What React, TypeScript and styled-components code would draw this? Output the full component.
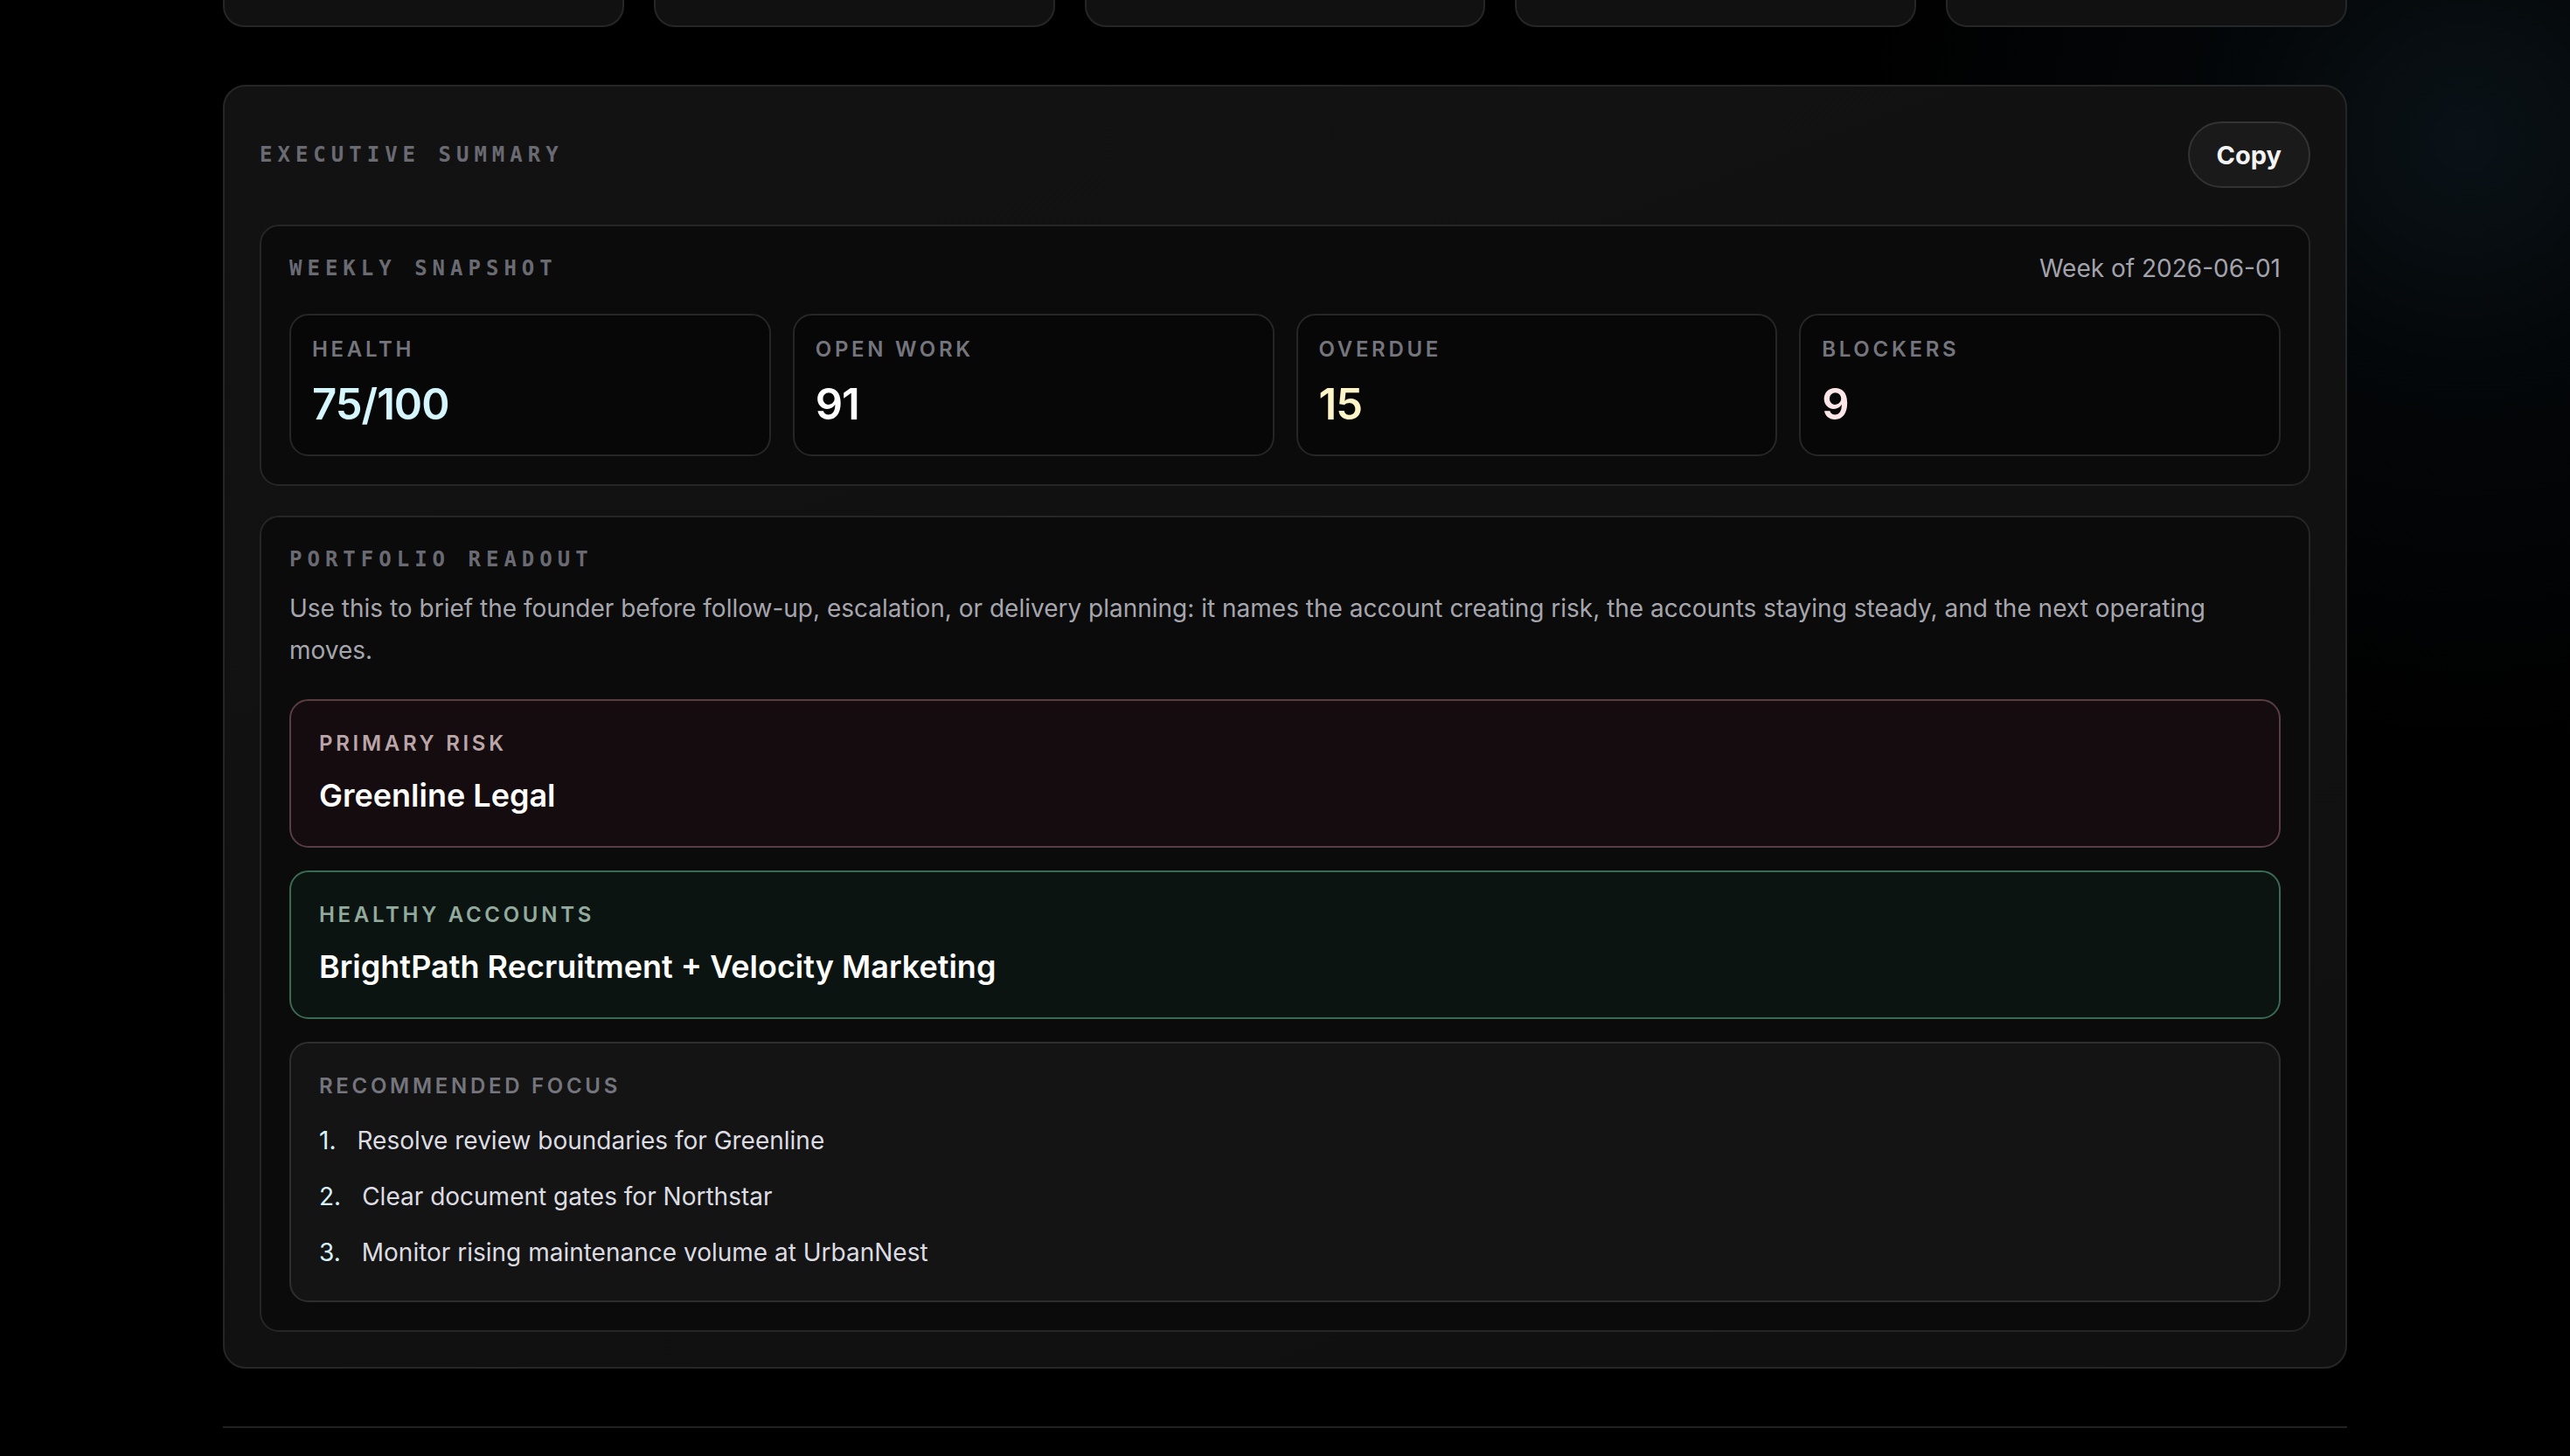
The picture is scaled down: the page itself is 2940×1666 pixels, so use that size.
import React from 'react';
import styled, { createGlobalStyle } from 'styled-components';

const GlobalStyle = createGlobalStyle`
  html, body {
    margin: 0;
    padding: 0;
    background: #000;
  }
  body {
    font-family: Inter, "Noto Sans", sans-serif;
    color: #f2f2f4;
    overflow: hidden;
  }
`;

const Page = styled.div`
  height: 1666px;
  background:
    radial-gradient(circle at 2820px 160px, rgba(20, 36, 46, 0.5) 0px, rgba(10, 18, 24, 0.35) 280px, rgba(0, 0, 0, 0) 700px),
    #000;
  overflow: hidden;
`;

const Column = styled.div`
  width: 2430px;
  margin: -149px auto 0;
  display: flex;
  flex-direction: column;
  gap: 66px;
`;

const TopCards = styled.div`
  display: grid;
  grid-template-columns: repeat(5, 1fr);
  gap: 34px;
`;

const TopCard = styled.div`
  height: 176px;
  background: #111;
  border: 2px solid #262626;
  border-radius: 24px;
`;

const Panel = styled.section`
  background: linear-gradient(160deg, #121212 0%, #101010 100%);
  border: 2px solid #262626;
  border-radius: 26px;
  padding: 40px;
  display: flex;
  flex-direction: column;
  gap: 42px;
`;

const PanelHeader = styled.div`
  display: flex;
  align-items: center;
  justify-content: space-between;
`;

const MonoLabel = styled.div`
  font-family: "DejaVu Sans Mono", "Liberation Mono", monospace;
  font-size: 24px;
  line-height: 32px;
  font-weight: 700;
  letter-spacing: 6px;
  text-transform: uppercase;
  color: #6a6a73;
`;

const CopyButton = styled.button`
  height: 76px;
  padding: 0 31px;
  border-radius: 999px;
  border: 2px solid #333;
  background: #1a1a1a;
  color: #f4f4f6;
  font-family: Inter, sans-serif;
  font-size: 29px;
  font-weight: 700;
  cursor: pointer;
`;

const Sections = styled.div`
  display: flex;
  flex-direction: column;
  gap: 34px;
`;

const Section = styled.div`
  background: #0b0b0b;
  border: 2px solid #262626;
  border-radius: 22px;
  padding: 32px;
`;

const SectionHeader = styled.div`
  display: flex;
  align-items: center;
  justify-content: space-between;
  margin-bottom: 36px;
`;

const WeekText = styled.div`
  font-size: 28px;
  line-height: 32px;
  color: #a3a3ad;
`;

const StatGrid = styled.div`
  display: grid;
  grid-template-columns: repeat(4, 1fr);
  gap: 25px;
`;

const StatCard = styled.div`
  background: #070707;
  border: 2px solid #262626;
  border-radius: 22px;
  padding: 23px 24px 29px;
`;

const SansLabel = styled.div<{ $tone?: string }>`
  font-size: 24px;
  line-height: 32px;
  font-weight: 600;
  letter-spacing: 3.7px;
  text-transform: uppercase;
  color: ${p => p.$tone || '#75757e'};
`;

const StatValue = styled.div<{ $color: string }>`
  margin-top: 19px;
  font-size: 49px;
  line-height: 56px;
  font-weight: 600;
  letter-spacing: -1px;
  color: ${p => p.$color};
`;

const Intro = styled.p`
  margin: 16px 0 32px;
  font-size: 28px;
  line-height: 48px;
  color: #a6a6ae;
`;

const Callouts = styled.div`
  display: flex;
  flex-direction: column;
  gap: 26px;
`;

const Callout = styled.div<{ $bg: string; $border: string }>`
  background: ${p => p.$bg};
  border: 2px solid ${p => p.$border};
  border-radius: 22px;
  padding: 33px 32px 32px;
`;

const CalloutTitle = styled.div`
  margin-top: 17px;
  font-size: 36px;
  line-height: 52px;
  font-weight: 600;
  color: #fff;
`;

const FocusList = styled.ol`
  list-style: none;
  margin: 26px 0 3px;
  padding: 0;
  display: flex;
  flex-direction: column;
  gap: 24px;
`;

const FocusItem = styled.li`
  font-size: 28px;
  line-height: 40px;
  color: #dcdce2;
`;

const FocusNum = styled.span`
  color: #d8f3fa;
  margin-right: 24px;
`;

const Footer = styled.div`
  border-top: 2px solid #222;
  height: 120px;
`;

const stats = [
  { label: 'Health', value: '75/100', color: '#d4f6fc' },
  { label: 'Open work', value: '91', color: '#ffffff' },
  { label: 'Overdue', value: '15', color: '#fdf4c8' },
  { label: 'Blockers', value: '9', color: '#fde6e8' },
];

const focus = [
  'Resolve review boundaries for Greenline',
  'Clear document gates for Northstar',
  'Monitor rising maintenance volume at UrbanNest',
];

export default function App() {
  return (
    <Page>
      <GlobalStyle />
      <Column>
        <TopCards>
          {[0, 1, 2, 3, 4].map(i => (
            <TopCard key={i} />
          ))}
        </TopCards>

        <Panel>
          <PanelHeader>
            <MonoLabel>Executive Summary</MonoLabel>
            <CopyButton>Copy</CopyButton>
          </PanelHeader>

          <Sections>
            <Section>
              <SectionHeader>
                <MonoLabel>Weekly Snapshot</MonoLabel>
                <WeekText>Week of 2026-06-01</WeekText>
              </SectionHeader>
              <StatGrid>
                {stats.map(s => (
                  <StatCard key={s.label}>
                    <SansLabel>{s.label}</SansLabel>
                    <StatValue $color={s.color}>{s.value}</StatValue>
                  </StatCard>
                ))}
              </StatGrid>
            </Section>

            <Section>
              <MonoLabel>Portfolio Readout</MonoLabel>
              <Intro>
                Use this to brief the founder before follow-up, escalation, or delivery planning: it names the
                account creating risk, the accounts staying steady, and the next operating moves.
              </Intro>
              <Callouts>
                <Callout $bg="#150c0f" $border="#5a3d44">
                  <SansLabel $tone="#bba5a9">Primary risk</SansLabel>
                  <CalloutTitle>Greenline Legal</CalloutTitle>
                </Callout>
                <Callout $bg="#0c1412" $border="#3b6a54">
                  <SansLabel $tone="#93ab9e">Healthy accounts</SansLabel>
                  <CalloutTitle>BrightPath Recruitment + Velocity Marketing</CalloutTitle>
                </Callout>
                <Callout $bg="#141414" $border="#2e2e2e">
                  <SansLabel>Recommended focus</SansLabel>
                  <FocusList>
                    {focus.map((f, i) => (
                      <FocusItem key={f}>
                        <FocusNum>{i + 1}.</FocusNum>
                        {f}
                      </FocusItem>
                    ))}
                  </FocusList>
                </Callout>
              </Callouts>
            </Section>
          </Sections>
        </Panel>

        <Footer />
      </Column>
    </Page>
  );
}
